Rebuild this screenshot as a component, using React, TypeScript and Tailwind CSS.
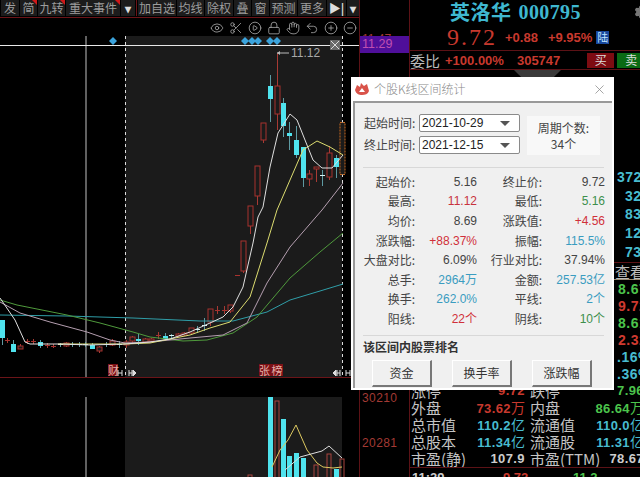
import { Eye, Scissors, CirclePlay, Lock, Hand, Undo2, CirclePlus, CircleMinus, Settings, X } from "lucide-react";

const cjk = "font-['Noto_Sans_CJK_SC','Liberation_Sans',sans-serif]";

type Tool = { label: string; w: string; flag?: boolean; glyph?: boolean };

const tools: Tool[] = [
  { label: "发", w: "w-[18px]" },
  { label: "简", w: "w-[17px]", flag: true },
  { label: "九转", w: "w-[27px]", flag: true },
  { label: "重大事件", w: "w-[54px]", flag: true },
  { label: "▾", w: "w-[14px]", glyph: true },
];
const tools2: Tool[] = [
  { label: "加自选", w: "w-[38px]" },
  { label: "均线", w: "w-[27px]" },
  { label: "除权", w: "w-[28px]" },
  { label: "叠", w: "w-[17px]" },
  { label: "窗", w: "w-[17px]" },
  { label: "预测", w: "w-[27px]" },
  { label: "更多", w: "w-[28px]" },
  { label: "▶|", w: "w-[19px]", glyph: true },
  { label: "▾", w: "w-[12px]", glyph: true },
];

function ToolButton({ t }: { t: Tool }) {
  return (
    <div
      className={`relative flex h-full shrink-0 items-center justify-center overflow-hidden whitespace-nowrap bg-[#1c1c1c] leading-none ${t.w} ${
        t.glyph ? "text-[12px] font-bold text-[#ddd]" : "text-[12px] text-[#9c9c9c]"
      }`}
    >
      {t.label}
      {t.flag && (
        <span className="absolute top-0 right-0 h-[5px] w-[5px] bg-[#d01818] [clip-path:polygon(0_0,100%_0,100%_100%)]" />
      )}
    </div>
  );
}

type Candle = { x: number; top: number; bottom: number; hi: number; lo: number; up: boolean };

const candles: Candle[] = [
  { x: 2, top: 320, bottom: 338, hi: 320, lo: 345, up: false },
  { x: 7, top: 340, bottom: 341, hi: 338, lo: 343, up: true },
  { x: 13, top: 344, bottom: 352, hi: 340, lo: 352, up: false },
  { x: 20, top: 346, bottom: 349, hi: 344, lo: 349, up: true },
  { x: 27, top: 341, bottom: 342, hi: 339, lo: 344, up: true },
  { x: 33, top: 341, bottom: 342, hi: 339, lo: 344, up: true },
  { x: 40, top: 342, bottom: 346, hi: 340, lo: 348, up: false },
  { x: 47, top: 345, bottom: 346, hi: 343, lo: 348, up: true },
  { x: 53, top: 346, bottom: 347, hi: 344, lo: 348, up: true },
  { x: 60, top: 344, bottom: 345, hi: 343, lo: 347, up: false },
  { x: 66, top: 343, bottom: 346, hi: 342, lo: 347, up: true },
  { x: 72, top: 344, bottom: 345, hi: 342, lo: 347, up: false },
  { x: 79, top: 344, bottom: 345, hi: 342, lo: 347, up: false },
  { x: 85, top: 344, bottom: 345, hi: 342, lo: 347, up: false },
  { x: 92, top: 345, bottom: 349, hi: 343, lo: 349, up: false },
  { x: 99, top: 347, bottom: 351, hi: 346, lo: 353, up: true },
  { x: 106, top: 344, bottom: 345, hi: 342, lo: 347, up: false },
  { x: 112, top: 341, bottom: 345, hi: 339, lo: 346, up: true },
  { x: 119, top: 344, bottom: 345, hi: 341, lo: 348, up: false },
  { x: 126, top: 342, bottom: 345, hi: 340, lo: 348, up: true },
  { x: 132, top: 337, bottom: 341, hi: 336, lo: 343, up: true },
  { x: 138, top: 339, bottom: 341, hi: 334, lo: 345, up: false },
  { x: 145, top: 339, bottom: 342, hi: 338, lo: 343, up: true },
  { x: 151, top: 339, bottom: 341, hi: 338, lo: 342, up: true },
  { x: 158, top: 335, bottom: 336, hi: 332, lo: 339, up: true },
  { x: 165, top: 336, bottom: 339, hi: 333, lo: 340, up: false },
  { x: 171, top: 335, bottom: 336, hi: 334, lo: 338, up: false },
  { x: 178, top: 334, bottom: 336, hi: 333, lo: 337, up: true },
  { x: 184, top: 333, bottom: 335, hi: 332, lo: 336, up: true },
  { x: 191, top: 328, bottom: 333, hi: 328, lo: 335, up: true },
  { x: 197, top: 329, bottom: 330, hi: 326, lo: 333, up: false },
  { x: 204, top: 325, bottom: 326, hi: 318, lo: 331, up: false },
  { x: 210, top: 309, bottom: 322, hi: 309, lo: 326, up: true },
  { x: 217, top: 310, bottom: 311, hi: 306, lo: 314, up: true },
  { x: 224, top: 310, bottom: 311, hi: 306, lo: 314, up: true },
  { x: 230, top: 305, bottom: 311, hi: 305, lo: 313, up: true },
  { x: 237, top: 275, bottom: 276, hi: 275, lo: 276, up: true },
  { x: 243, top: 241, bottom: 271, hi: 241, lo: 273, up: true },
  { x: 250, top: 206, bottom: 226, hi: 206, lo: 234, up: true },
  { x: 257, top: 166, bottom: 196, hi: 166, lo: 205, up: true },
  { x: 263, top: 123, bottom: 140, hi: 123, lo: 143, up: true },
  { x: 270, top: 86, bottom: 99, hi: 75, lo: 122, up: false },
  { x: 277, top: 86, bottom: 114, hi: 53, lo: 130, up: true },
  { x: 283, top: 103, bottom: 126, hi: 98, lo: 137, up: false },
  { x: 289, top: 133, bottom: 136, hi: 122, lo: 150, up: false },
  { x: 296, top: 140, bottom: 155, hi: 126, lo: 158, up: false },
  { x: 303, top: 147, bottom: 178, hi: 147, lo: 187, up: false },
  { x: 309, top: 174, bottom: 179, hi: 170, lo: 186, up: true },
  { x: 316, top: 167, bottom: 169, hi: 167, lo: 182, up: true },
  { x: 322, top: 175, bottom: 176, hi: 170, lo: 186, up: false },
  { x: 329, top: 153, bottom: 177, hi: 146, lo: 180, up: true },
  { x: 336, top: 158, bottom: 167, hi: 155, lo: 178, up: false },
];

const averages: { color: string; pts: string }[] = [
  {
    color: "#2f9ea8",
    pts: "0,315 67,316 133,318 200,321 233,321 267,312 290,300 320,291 343,284",
  },
  {
    color: "#4f9a3c",
    pts: "0,300 17,305 67,315 100,323 133,332 150,337 183,341 207,340 233,333 257,317 290,278 320,252 343,233",
  },
  {
    color: "#b59fb0",
    pts: "0,302 20,313 50,322 87,332 110,340 125,343 150,342 190,338 223,335 247,323 267,283 290,247 322,210 343,183",
  },
  {
    color: "#dcdc70",
    pts: "58,344 125,344 150,343 190,335 210,328 230,322 250,297 267,243 277,210 290,180 303,150 317,141 330,147 343,155",
  },
  {
    color: "#e0e0e0",
    pts: "0,298 15,320 25,342 30,344 60,344 90,345 125,344 150,342 170,339 190,332 210,323 223,317 233,307 243,287 253,243 258,217 263,207 270,167 278,133 290,114 297,120 305,140 313,160 322,168 332,168 343,155",
  },
];

const volumes: { x: number; top: number; up: boolean }[] = [
  { x: 270, top: 397, up: false },
  { x: 277, top: 401, up: true },
  { x: 283, top: 419, up: false },
  { x: 289, top: 456, up: false },
  { x: 296, top: 453, up: false },
  { x: 303, top: 458, up: false },
  { x: 316, top: 465, up: true },
  { x: 329, top: 454, up: true },
  { x: 336, top: 469, up: false },
  { x: 342, top: 459, up: true },
  { x: 250, top: 475, up: true },
];

// The price and volume canvas; its coordinates are page pixels, hence the viewBox offset.
function Chart() {
  return (
    <svg width="359" height="441" viewBox="0 36 359 441" className="block">
      <rect x="125" y="36" width="217" height="342" fill="#1b1b1b" />
      <rect x="125" y="397" width="217" height="80" fill="#1b1b1b" />
      <line x1="0" y1="377.5" x2="359" y2="377.5" stroke="#6b1418" />
      <line x1="86" y1="36" x2="86" y2="377" stroke="#8a8a8a" strokeWidth="1.4" />
      <line x1="86" y1="397" x2="86" y2="477" stroke="#8a8a8a" strokeWidth="1.4" />
      <line x1="0" y1="45.5" x2="359" y2="45.5" stroke="#e8e8e8" />
      <line x1="125.5" y1="36" x2="125.5" y2="378" stroke="#ddd" strokeDasharray="3 3" />
      <line x1="342.5" y1="36" x2="342.5" y2="378" stroke="#ddd" strokeDasharray="3 3" />

      {candles.map((c) => {
        const color = c.up ? "#a8322e" : "#4fe3ee";
        const wick = c.up ? "#a83a34" : "#5e9aa2";
        return (
          <g key={c.x}>
            <line x1={c.x + 0.5} y1={c.hi} x2={c.x + 0.5} y2={c.lo} stroke={wick} />
            {c.bottom - c.top < 2 ? (
              <line x1={c.x - 2} y1={c.top + 0.5} x2={c.x + 3} y2={c.top + 0.5} stroke={c.up ? color : "#d8f4f4"} />
            ) : (
              <rect
                x={c.x - 2}
                y={c.top}
                width="5"
                height={c.bottom - c.top}
                fill={c.up ? "#1b1b1b" : color}
                stroke={c.up ? color : "none"}
              />
            )}
          </g>
        );
      })}
      <rect x="340" y="122.5" width="5" height="52" fill="#1b1b1b" stroke="#c86a20" strokeDasharray="2 1" />

      {averages.map((a) => (
        <polyline key={a.color} points={a.pts} fill="none" stroke={a.color} strokeWidth="1" strokeLinejoin="round" />
      ))}

      {[113, 245, 252, 258, 270, 277].map((x) => (
        <polygon key={x} points={`${x - 4},41 ${x},37 ${x + 4},41 ${x},45`} fill="#3ba3dc" />
      ))}

      <rect x="330" y="40" width="10" height="10" fill="#6a6a6a" />
      <path d="M331 41 L339 49 M339 41 L331 49" stroke="#ddd" strokeWidth="1" />

      <path d="M277 53 H289" stroke="#bbb" />
      <path d="M277 53 L280 51 V55 Z" fill="#bbb" />
      <text x="291" y="57" fontSize="12" fill="#a8a8a8" fontFamily="Liberation Sans">
        11.12
      </text>

      <rect x="108" y="364" width="10" height="12" fill="#7c1116" />
      <text x="108" y="374.5" fontSize="11" fill="#e6b0a8" fontFamily="Noto Sans CJK SC">
        财
      </text>
      <rect x="259" y="364" width="24" height="12" fill="#7c1116" />
      <text x="259" y="374.5" fontSize="11" letterSpacing="1.6" fill="#e6b0a8" fontFamily="Noto Sans CJK SC">
        张榜
      </text>
      <g stroke="#ddd" fill="#ddd">
        <path d="M118 370 V376 M118 373 H122 M122 370 V376" fill="none" />
        <path d="M129 370 V376 M129 373 H132 M132 370 V376" fill="none" />
        <path d="M133 370 L136 373 L133 376 Z" />
        <path d="M336 370 L333 373 L336 376 Z" />
        <path d="M337 370 V376 M337 373 H340 M340 370 V376" fill="none" />
        <path d="M346 370 V376 M346 373 H350 M350 370 V376" fill="none" />
      </g>

      {volumes.map((v) =>
        v.up ? (
          <rect key={v.x} x={v.x - 2} y={v.top} width="4" height={482 - v.top} fill="none" stroke="#a8453f" />
        ) : (
          <rect key={v.x} x={v.x - 2} y={v.top} width="5" height={477 - v.top} fill="#4fe3ee" />
        ),
      )}
      <polyline
        points="272,467 280,450 288,440 296,425 307,450 317,463 323,467 333,468 342,467"
        fill="none"
        stroke="#dcc860"
      />
      <polyline points="285,470 300,457 322,451 329,446 342,458" fill="none" stroke="#ddd" />
    </svg>
  );
}

function QuoteRow({
  a,
  b,
  c,
  d,
  bColor,
  dColor,
  unit,
  unit2,
}: {
  a: string;
  b: string;
  c: string;
  d: string;
  bColor: string;
  dColor: string;
  unit?: string;
  unit2?: string;
}) {
  return (
    <div className="flex h-[17px] shrink-0 items-center text-[15px] leading-none text-[#c4c4c4]">
      <div className="flex w-[119px] shrink-0 items-center justify-between pl-[1px] pr-[4px]">
        <span className="whitespace-nowrap">{a}</span>
        <span className={`flex items-baseline font-bold ${bColor}`}>
          <span className="font-['Liberation_Sans'] text-[13px] tracking-[0.4px]">{b}</span>
          {unit && <span className="text-[14px] font-normal">{unit}</span>}
        </span>
      </div>
      <div className="ml-[1px] flex w-[114px] shrink-0 items-center justify-between">
        <span className="whitespace-nowrap">{c}</span>
        <span className={`flex items-baseline font-bold ${dColor}`}>
          <span className="font-['Liberation_Sans'] text-[13px] tracking-[0.4px]">{d}</span>
          {unit2 && <span className="text-[14px] font-normal">{unit2}</span>}
        </span>
      </div>
    </div>
  );
}

type Stat = { l1: string; v1: string; c1: string; l2: string; v2: string; c2: string };

const stats: Stat[] = [
  { l1: "起始价:", v1: "5.16", c1: "text-[#444]", l2: "终止价:", v2: "9.72", c2: "text-[#444]" },
  { l1: "最高:", v1: "11.12", c1: "text-[#c8323c]", l2: "最低:", v2: "5.16", c2: "text-[#3d8f4c]" },
  { l1: "均价:", v1: "8.69", c1: "text-[#444]", l2: "涨跌值:", v2: "+4.56", c2: "text-[#d0303a]" },
  { l1: "涨跌幅:", v1: "+88.37%", c1: "text-[#d0303a]", l2: "振幅:", v2: "115.5%", c2: "text-[#3a9cc0]" },
  { l1: "大盘对比:", v1: "6.09%", c1: "text-[#444]", l2: "行业对比:", v2: "37.94%", c2: "text-[#444]" },
  { l1: "总手:", v1: "2964万", c1: "text-[#3a9cc0]", l2: "金额:", v2: "257.53亿", c2: "text-[#3a9cc0]" },
  { l1: "换手:", v1: "262.0%", c1: "text-[#3a9cc0]", l2: "平线:", v2: "2个", c2: "text-[#3a9cc0]" },
  { l1: "阳线:", v1: "22个", c1: "text-[#d0303a]", l2: "阴线:", v2: "10个", c2: "text-[#3d8f4c]" },
];

function DateSelect({ value }: { value: string }) {
  return (
    <div className="flex h-[18px] w-[101px] items-center justify-between rounded-[2px] border border-[#8a8a8a] bg-white pl-[2px] pr-[9px] font-['Liberation_Sans'] text-[12px] leading-none text-[#222]">
      {value}
      <span className="h-0 w-0 border-x-[5px] border-t-[5px] border-x-transparent border-t-[#555]" />
    </div>
  );
}

function RankButton({ label }: { label: string }) {
  return (
    <button className="h-[27px] w-[60px] border-r-2 border-b-2 border-t border-l border-r-[#777] border-b-[#777] border-t-white border-l-white bg-[#f0f0f0] text-[12px] leading-none text-[#333]">
      {label}
    </button>
  );
}

function StatsDialog() {
  return (
    <div className={`absolute top-[77px] left-[351px] w-[263px] bg-white ${cjk}`}>
      <div className="flex h-[24px] items-center pl-[3px] pr-[7px]">
        <svg width="16" height="14" viewBox="0 0 16 14">
          <path d="M1 8 L3 3 L6 5 L7 1 L10 4 L13 2 L15 9 C14 12 11 13 8 13 C5 13 2 12 1 8 Z" fill="#d9534a" />
          <path d="M8 6 L11 10 H5 Z" fill="#fff" />
        </svg>
        <span className="ml-[4px] text-[12px] leading-none font-light text-[#8a8a8a]">个股K线区间统计</span>
        <X className="ml-auto text-[#888]" size={15} strokeWidth={1.2} />
      </div>
      <div className="mx-[2px] mb-[2px] border-t-2 border-l-2 border-[#999] bg-[#f0f0f0] pb-[1px]">
        <div className="flex pt-[11px]">
          <div className="flex flex-col gap-[4px] pl-[9px]">
            <div className="flex items-center text-[12px] leading-none text-[#444]">
              <span className="w-[55px] whitespace-nowrap">起始时间:</span>
              <DateSelect value="2021-10-29" />
            </div>
            <div className="flex items-center text-[12px] leading-none text-[#444]">
              <span className="w-[55px] whitespace-nowrap">终止时间:</span>
              <DateSelect value="2021-12-15" />
            </div>
          </div>
          <div className="mt-[2px] ml-[7px] flex h-[39px] w-[73px] flex-col items-center justify-center gap-[4px] bg-[#f8f8f8] text-[12px] leading-none text-[#444]">
            <span>周期个数:</span>
            <span>34个</span>
          </div>
        </div>
        <div className="mx-[8px] mt-[12px] h-px bg-[#d8d8d8]" />
        <div className="mt-[4px] ml-[8px] grid grid-cols-[52px_62px_65px_63px] auto-rows-[19.6px] items-center text-[12px] leading-none">
          {stats.map((s) => (
            <div key={s.l1} className="contents">
              <span className="text-right whitespace-nowrap text-[#444]">{s.l1}</span>
              <span className={`text-right font-['Liberation_Sans','Noto_Sans_CJK_SC'] ${s.c1}`}>{s.v1}</span>
              <span className="text-right whitespace-nowrap text-[#444]">{s.l2}</span>
              <span className={`text-right font-['Liberation_Sans','Noto_Sans_CJK_SC'] ${s.c2}`}>{s.v2}</span>
            </div>
          ))}
        </div>
        <div className="mx-[8px] mt-[6px] h-px bg-[#d8d8d8]" />
        <div className="mt-[4px] ml-[8px] text-[12px] leading-[14px] font-bold text-[#333]">该区间内股票排名</div>
        <div className="mt-[6px] flex gap-[20px] pl-[17px]">
          <RankButton label="资金" />
          <RankButton label="换手率" />
          <RankButton label="涨跌幅" />
        </div>
      </div>
    </div>
  );
}

const sideRows: { text: string; pl: string; h: string }[] = [
  { text: "3720", pl: "pl-[207px]", h: "h-[19px]" },
  { text: "325", pl: "pl-[215px]", h: "h-[19px]" },
  { text: "832", pl: "pl-[215px]", h: "h-[18px]" },
  { text: "127", pl: "pl-[215px]", h: "h-[19px]" },
  { text: "737", pl: "pl-[215px]", h: "h-[20px]" },
];
const sideRows2: { text: string; color: string; pl: string }[] = [
  { text: "8.67", color: "text-[#4cc44c]", pl: "pl-[208px]" },
  { text: "9.72", color: "text-[#cf3a30]", pl: "pl-[208px]" },
  { text: "8.61", color: "text-[#4cc44c]", pl: "pl-[208px]" },
  { text: "2.32", color: "text-[#cf3a30]", pl: "pl-[208px]" },
  { text: ".16%", color: "text-[#48bcd0]", pl: "pl-[207px]" },
  { text: ".36%", color: "text-[#48bcd0]", pl: "pl-[207px]" },
];

function QuotePanel() {
  return (
    <div className={`flex h-full min-w-0 flex-1 flex-col overflow-hidden border-l border-[#5c1216] ${cjk}`}>
      <div className="flex h-[24px] shrink-0 items-center pl-[40px]">
        <span className="text-[20px] leading-none font-bold tracking-[0.5px] text-[#3fb8d0]">英洛华</span>
        <span className="ml-[7px] font-['Liberation_Serif'] text-[20px] leading-none font-bold tracking-[0.4px] text-[#3fb8d0]">
          000795
        </span>
        <Settings className="ml-auto mr-[-8px] text-[#777]" size={14} fill="#777" />
      </div>
      <div className="flex h-[27px] shrink-0 items-center whitespace-nowrap border-b border-[#5c1216] pl-[37px] text-[#c8392e]">
        <span className="font-['Liberation_Serif'] text-[24px] leading-none tracking-[2px]">9.72</span>
        <span className="ml-[8px] font-['Liberation_Sans'] text-[13px] leading-none font-bold">+0.88</span>
        <span className="ml-[10px] font-['Liberation_Sans'] text-[13px] leading-none font-bold">+9.95%</span>
        <span className="ml-[4px] flex h-[13px] w-[13px] shrink-0 items-center justify-center bg-[#17479c] text-[11px] leading-none text-[#bfe4ff]">
          陆
        </span>
      </div>
      <div className="flex h-[19px] shrink-0 items-center whitespace-nowrap border-b border-[#5c1216] text-[#c8392e]">
        <span className="w-[30px] shrink-0 text-[15px] leading-none text-[#bbb]">委比</span>
        <span className="ml-[5px] shrink-0 font-['Liberation_Sans'] text-[13px] leading-none font-bold">+100.00%</span>
        <span className="ml-[13px] shrink-0 font-['Liberation_Sans'] text-[13px] leading-none font-bold">305747</span>
        <span className="ml-[27px] flex h-[15px] w-[27px] shrink-0 items-center justify-center bg-[#7e0c12] text-[12px] leading-none text-[#ddd]">
          买
        </span>
        <span className="ml-[3px] flex h-[15px] w-[28px] shrink-0 items-center justify-center bg-[#0b6a14] text-[12px] leading-none text-[#ddd]">
          卖
        </span>
      </div>
      <div className="ml-[104px] h-[7px] w-[47px] shrink-0 bg-[#3a3a3a] [clip-path:polygon(0_0,100%_0,85%_100%,15%_100%)]" />

      <div className="mt-[90px] flex shrink-0 flex-col font-['Liberation_Sans'] text-[14px] leading-none font-bold tracking-[0.5px] text-[#48bcd0]">
        {sideRows.map((r) => (
          <div key={r.text} className={`flex items-center whitespace-nowrap ${r.h} ${r.pl}`}>
            {r.text}
          </div>
        ))}
      </div>
      <div className="flex h-[18px] shrink-0 items-center whitespace-nowrap border-y border-t-[#5c1216] border-b-[#9a8a70] pl-[205px] text-[15px] leading-none text-[#bbb]">
        查看
      </div>
      <div className="flex shrink-0 flex-col font-['Liberation_Sans'] text-[14px] leading-none font-bold tracking-[0.5px]">
        {sideRows2.map((r) => (
          <div key={r.text} className={`flex h-[17px] items-center whitespace-nowrap ${r.pl} ${r.color}`}>
            {r.text}
          </div>
        ))}
      </div>
      <div className="flex shrink-0 flex-col">
        <QuoteRow a="涨停" b="9.72" c="跌停" d="7.96" bColor="text-[#c8392e]" dColor="text-[#4cc44c]" />
        <QuoteRow a="外盘" b="73.62" unit="万" c="内盘" d="86.64" unit2="万" bColor="text-[#c8392e]" dColor="text-[#4cc44c]" />
        <QuoteRow a="总市值" b="110.2" unit="亿" c="流通值" d="110.0" unit2="亿" bColor="text-[#48bcd0]" dColor="text-[#48bcd0]" />
        <QuoteRow a="总股本" b="11.34" unit="亿" c="流通股" d="11.31" unit2="亿" bColor="text-[#48bcd0]" dColor="text-[#48bcd0]" />
        <QuoteRow a="市盈(静)" b="107.9" c="市盈(TTM)" d="78.67" bColor="text-[#ccc]" dColor="text-[#ccc]" />
      </div>
      <div className="h-px shrink-0 bg-[#5c1216]" />
      {/* First row of the tick list, which continues below the fold */}
      <div className="mt-[3px] flex shrink-0 pl-[2px] font-['Liberation_Sans'] text-[13px] leading-none font-bold whitespace-nowrap">
        <span className="w-[91px] shrink-0 text-[#ccc]">11:29</span>
        <span className="w-[70px] shrink-0 text-[#c8392e]">9.72</span>
        <span className="text-[#4cc44c]">11.2</span>
      </div>
    </div>
  );
}

export default function App() {
  return (
    <div className={`relative flex h-[477px] w-[640px] overflow-hidden bg-black ${cjk}`}>
      <div className="flex h-full w-[359px] shrink-0 flex-col">
        <div className="flex h-[18px] shrink-0 items-stretch gap-px border-b border-[#6b1418] pb-px pl-[1px]">
          {tools.map((t, i) => (
            <ToolButton key={i} t={t} />
          ))}
          <div className="w-px bg-[#6b1418]" />
          {tools2.map((t, i) => (
            <ToolButton key={i} t={t} />
          ))}
        </div>
        <div className="flex h-[18px] shrink-0 items-center justify-end gap-[5px] pr-[2px] pt-[2px] text-[#a8a8a8]">
          <Eye size={14} strokeWidth={1.4} />
          <Scissors size={14} strokeWidth={1.4} />
          <CirclePlay size={14} strokeWidth={1.4} />
          <Lock size={14} strokeWidth={1.4} />
          <Hand size={14} strokeWidth={1.4} />
          <Undo2 size={14} strokeWidth={1.4} />
          <CirclePlus size={14} strokeWidth={1.4} />
          <CircleMinus size={14} strokeWidth={1.4} />
        </div>
        <Chart />
      </div>
      <div className="flex h-full w-[50px] shrink-0 flex-col border-l border-[#5c1216] font-['Liberation_Sans'] text-[12px] text-[#a33a34]">
        <div className="mt-[33px] h-[3px] overflow-hidden pl-[2px] leading-[12px]">11.47</div>
        <div className="flex h-[17px] items-center bg-[#4f0f9a] pl-[2px] text-[12.5px] leading-none text-[#c050b0]">11.29</div>
        <div className="mt-[337px] pl-[2px] leading-[16px] tracking-[0.4px]">30210</div>
        <div className="mt-[29px] pl-[2px] leading-[16px] tracking-[0.4px]">20281</div>
      </div>
      <QuotePanel />
      <StatsDialog />
    </div>
  );
}
